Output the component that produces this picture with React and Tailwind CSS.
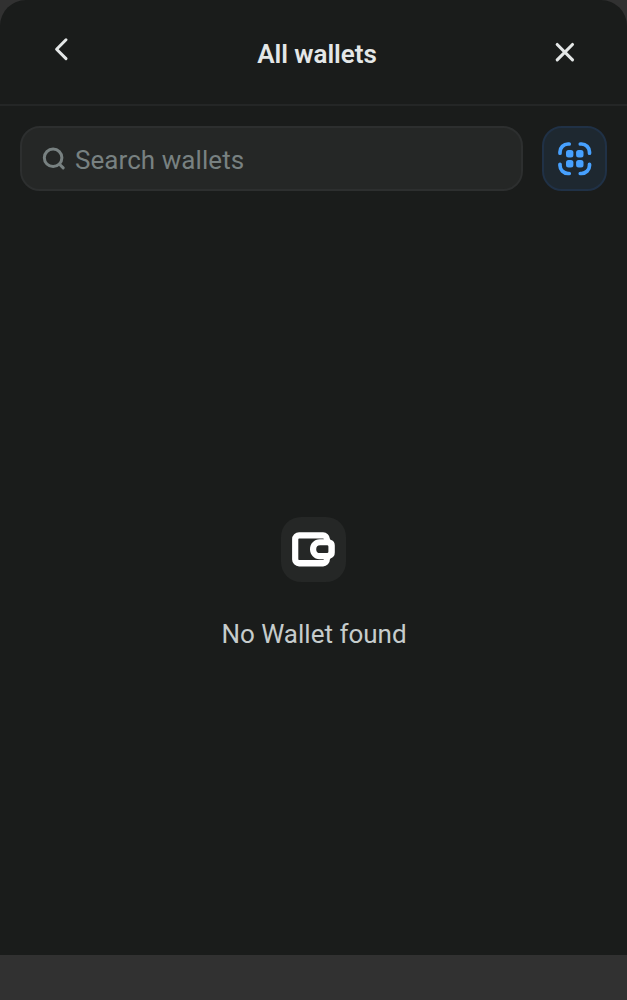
function BackIcon() {
  return (
    <svg width="24" height="28" viewBox="0 0 24 28" fill="none" stroke="#e4e7e7" strokeWidth="3" strokeLinecap="round" strokeLinejoin="round">
      <path d="M16 3.8 6.6 13.2l9.4 9.4" />
    </svg>
  );
}

function CloseIcon() {
  return (
    <svg width="24" height="24" viewBox="0 0 24 24" fill="none" stroke="#e4e7e7" strokeWidth="3.1" strokeLinecap="round">
      <path d="m4.2 4.5 15.3 15.3M19.5 4.5 4.2 19.8" />
    </svg>
  );
}

function SearchIcon() {
  return (
    <svg width="24" height="24" viewBox="0 0 24 24" fill="none" stroke="#788181" strokeWidth="3" strokeLinecap="round">
      <circle cx="11.1" cy="10.8" r="8.8" />
      <path d="m17.5 17.2 3.7 3.7" />
    </svg>
  );
}

function QrIcon() {
  return (
    <svg width="34" height="34" viewBox="0 0 34 34" fill="none">
      <path
        d="M2 11.2V10a8 8 0 0 1 8-8h1.2M22.3 2h1.2a8 8 0 0 1 8 8v1.2M31.5 22.3v1.2a8 8 0 0 1-8 8h-1.2M11.2 31.5H10a8 8 0 0 1-8-8v-1.2"
        stroke="#47a1ff"
        strokeWidth="3.7"
        strokeLinecap="round"
      />
      <g fill="#47a1ff">
        <rect x="8" y="8" width="7.4" height="7.4" rx="2.5" />
        <rect x="18.1" y="8" width="7.4" height="7.4" rx="2.5" />
        <rect x="8" y="18" width="7.4" height="7.4" rx="2.5" />
        <rect x="18.1" y="18" width="7.4" height="7.4" rx="2.5" />
      </g>
    </svg>
  );
}

function WalletIcon() {
  return (
    <svg width="44" height="36" viewBox="0 0 44 36" fill="none">
      <path
        fill="#fff"
        fillRule="evenodd"
        d="M7.1 .2h24a7 7 0 0 1 6.8 6.6l.6 1a6 6 0 0 1 4.3 5.8v7a6 6 0 0 1-4.3 5.8l-.6 1a7 7 0 0 1-6.8 7h-24a7 7 0 0 1-7-7V7.2a7 7 0 0 1 7-7ZM7.1 6.6a.8.8 0 0 0-.8.8v19.8a.8.8 0 0 0 .8.8h24a.8.8 0 0 0 .8-.8h-4.3c-5.4 0-9.6-4.4-9.6-10s4.2-10 9.6-10h4.3a.8.8 0 0 0-.8-.6ZM28.1 13.3a3.9 3.9 0 0 0 0 7.8h7a1.3 1.3 0 0 0 1.3-1.3v-5.2a1.3 1.3 0 0 0-1.3-1.3Z"
      />
    </svg>
  );
}

export default function App() {
  return (
    <div className="flex h-[1000px] w-[627px] flex-col overflow-hidden bg-[#313131] font-['Roboto',sans-serif] text-[26px] leading-8">
      <main className="flex h-[955px] flex-col rounded-t-[26px] bg-[#1a1c1b]">
        <header className="flex h-[106px] shrink-0 items-start justify-between border-b-2 border-[#242626] px-[50px]">
          <button aria-label="Back" className="mt-9 flex">
            <BackIcon />
          </button>
          <h1 className="mt-[38px] pl-[7px] font-semibold tracking-[-0.05px] text-[#e4e7e7]">All wallets</h1>
          <button aria-label="Close" className="mt-10 flex">
            <CloseIcon />
          </button>
        </header>
        <div className="flex shrink-0 gap-[19px] pl-[19.5px] pt-5">
          <label className="flex h-[65.4px] w-[503.4px] items-center rounded-[20px] border-2 border-[#2d2f2f] bg-[#252726] pl-[20.5px]">
            <SearchIcon />
            <input
              type="text"
              placeholder="Search wallets"
              className="ml-[9px] mt-[3px] w-[380px] bg-transparent tracking-[0.06px] outline-none placeholder:text-[#788181]"
            />
          </label>
          <button aria-label="Scan QR code" className="flex h-[65.4px] w-[65.5px] items-center justify-center rounded-[20px] border-2 border-[#203146] bg-[#1e2830]">
            <QrIcon />
          </button>
        </div>
        <section className="flex flex-col items-center pt-[325.6px]">
          <div className="flex size-[65px] items-center justify-center rounded-[20px] bg-[#252726] pt-px">
            <WalletIcon />
          </div>
          <p className="mt-9 pl-px text-[#c6cccc]">No Wallet found</p>
        </section>
      </main>
    </div>
  );
}
